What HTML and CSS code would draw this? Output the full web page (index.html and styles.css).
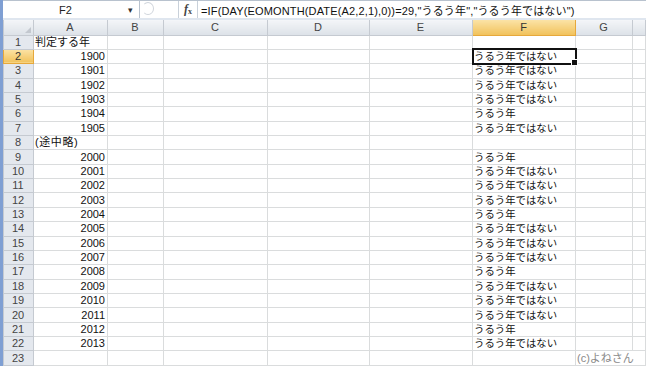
FILE: index.html
```html
<!DOCTYPE html>
<html lang="ja">
<head>
  <meta charset="UTF-8" />
  <title>うるう年の判定</title>
  <link rel="stylesheet" href="styles.css">
</head>
<body>
  <div class="window">
    <div class="formula-bar">
      <div class="name-box">
        <span class="name">F2</span>
        <span class="arrow">▾</span>
      </div>
      <div class="grip"></div>
      <div class="fx"><i>f</i><small>x</small></div>
      <div class="formula">=IF(DAY(EOMONTH(DATE(A2,2,1),0))=29,"うるう年","うるう年ではない")</div>
    </div>

    <table class="sheet">
      <colgroup>
        <col class="c-hdr"><col class="c-a"><col class="c-b"><col class="c-c"><col class="c-d">
        <col class="c-e"><col class="c-f"><col class="c-g"><col class="c-h">
      </colgroup>
      <thead>
        <tr>
          <th class="corner"><span class="tri"></span></th>
          <th>A</th><th>B</th><th>C</th><th>D</th><th>E</th><th class="sel">F</th><th>G</th><th></th>
        </tr>
      </thead>
      <tbody>
        <tr><th>1</th><td>判定する年</td><td></td><td></td><td></td><td></td><td></td><td></td><td></td></tr>
        <tr><th class="sel">2</th><td class="num">1900</td><td></td><td></td><td></td><td></td><td class="active">うるう年ではない<span class="handle"></span></td><td></td><td></td></tr>
        <tr><th>3</th><td class="num">1901</td><td></td><td></td><td></td><td></td><td>うるう年ではない</td><td></td><td></td></tr>
        <tr><th>4</th><td class="num">1902</td><td></td><td></td><td></td><td></td><td>うるう年ではない</td><td></td><td></td></tr>
        <tr><th>5</th><td class="num">1903</td><td></td><td></td><td></td><td></td><td>うるう年ではない</td><td></td><td></td></tr>
        <tr><th>6</th><td class="num">1904</td><td></td><td></td><td></td><td></td><td>うるう年</td><td></td><td></td></tr>
        <tr><th>7</th><td class="num">1905</td><td></td><td></td><td></td><td></td><td>うるう年ではない</td><td></td><td></td></tr>
        <tr><th>8</th><td class="note">(途中略)</td><td></td><td></td><td></td><td></td><td></td><td></td><td></td></tr>
        <tr><th>9</th><td class="num">2000</td><td></td><td></td><td></td><td></td><td>うるう年</td><td></td><td></td></tr>
        <tr><th>10</th><td class="num">2001</td><td></td><td></td><td></td><td></td><td>うるう年ではない</td><td></td><td></td></tr>
        <tr><th>11</th><td class="num">2002</td><td></td><td></td><td></td><td></td><td>うるう年ではない</td><td></td><td></td></tr>
        <tr><th>12</th><td class="num">2003</td><td></td><td></td><td></td><td></td><td>うるう年ではない</td><td></td><td></td></tr>
        <tr><th>13</th><td class="num">2004</td><td></td><td></td><td></td><td></td><td>うるう年</td><td></td><td></td></tr>
        <tr><th>14</th><td class="num">2005</td><td></td><td></td><td></td><td></td><td>うるう年ではない</td><td></td><td></td></tr>
        <tr><th>15</th><td class="num">2006</td><td></td><td></td><td></td><td></td><td>うるう年ではない</td><td></td><td></td></tr>
        <tr><th>16</th><td class="num">2007</td><td></td><td></td><td></td><td></td><td>うるう年ではない</td><td></td><td></td></tr>
        <tr><th>17</th><td class="num">2008</td><td></td><td></td><td></td><td></td><td>うるう年</td><td></td><td></td></tr>
        <tr><th>18</th><td class="num">2009</td><td></td><td></td><td></td><td></td><td>うるう年ではない</td><td></td><td></td></tr>
        <tr><th>19</th><td class="num">2010</td><td></td><td></td><td></td><td></td><td>うるう年ではない</td><td></td><td></td></tr>
        <tr><th>20</th><td class="num">2011</td><td></td><td></td><td></td><td></td><td>うるう年ではない</td><td></td><td></td></tr>
        <tr><th>21</th><td class="num">2012</td><td></td><td></td><td></td><td></td><td>うるう年</td><td></td><td></td></tr>
        <tr><th>22</th><td class="num">2013</td><td></td><td></td><td></td><td></td><td>うるう年ではない</td><td></td><td></td></tr>
        <tr><th>23</th><td></td><td></td><td></td><td></td><td></td><td></td><td class="credit" colspan="2">(c)よねさん</td></tr>
      </tbody>
    </table>
  </div>
</body>
</html>
```

FILE: styles.css
```css
body {
  margin: 0;
  background-color: #fff;
  font-family: 'Liberation Sans', 'Noto Sans CJK JP', sans-serif;
  font-size: 11px;
  color: #111;
}

.window {
  height: 366px;
  overflow: hidden;
  border-left: 3px solid #7f9fd3;
  background-color: #fff;
}

/* formula bar */
.formula-bar {
  display: flex;
  align-items: stretch;
  height: 17px;
  padding-bottom: 2px;
  border-top: 1px solid #b8c2ce;
  background-color: #dfe6ef;
}

.name-box {
  display: flex;
  align-items: center;
  width: 137px;
  padding: 0 6px 0 0;
  box-sizing: border-box;
  background-color: #fff;
  border-right: 1px solid #b8c2ce;
}

.name {
  flex: 1;
  text-align: center;
  color: #222;
}

.arrow {
  font-size: 9px;
  color: #333;
}

.grip {
  width: 38px;
  background-color: #fff;
  position: relative;
  border-right: 1px solid #c9d1da;
}

.grip::before {
  content: "";
  position: absolute;
  left: 2px;
  top: 1px;
  width: 12px;
  height: 13px;
  border-radius: 50%;
  border: 1px solid #d0d5dc;
  border-left-color: transparent;
  box-sizing: border-box;
}

.fx {
  width: 18px;
  display: flex;
  align-items: center;
  justify-content: center;
  background-color: #fff;
  border-right: 1px solid #c9d1da;
  font-family: 'Liberation Serif', serif;
  font-weight: bold;
  font-size: 12px;
  color: #444;
}

.fx small {
  font-size: 8px;
  margin-top: 3px;
}

.formula {
  flex: 1;
  display: flex;
  align-items: center;
  padding-left: 3px;
  background-color: #fff;
  white-space: nowrap;
  letter-spacing: 0.15px;
}

/* grid */
.sheet {
  border-collapse: collapse;
  table-layout: fixed;
  width: 643px;
}

.c-hdr { width: 30px; }
.c-a { width: 74px; }
.c-b { width: 56px; }
.c-c { width: 104px; }
.c-d { width: 102px; }
.c-e { width: 103px; }
.c-f { width: 103px; }
.c-g { width: 57px; }

.sheet th,
.sheet td {
  padding: 0 2px 0 1px;
  height: 14.36px;
  line-height: 13px;
  border: 1px solid #dadcdd;
  white-space: nowrap;
  overflow: visible;
  box-sizing: border-box;
}

.sheet td:nth-child(7) {
  font-size: 10.4px;
}

.sheet thead th {
  height: 15px;
  font-weight: normal;
  color: #444;
  background: linear-gradient(#f3f5f8, #dde2e8);
  border-color: #c5cad1;
  border-top: none;
}

.sheet tbody th {
  font-weight: normal;
  color: #444;
  background-color: #e4e8ee;
  border-color: #c5cad1;
  text-align: center;
}

.sheet th.sel {
  background: linear-gradient(#fbe3a6, #f1c25c);
  border-color: #e6a83b;
  color: #333;
}

.corner {
  position: relative;
}

.tri {
  position: absolute;
  right: 2px;
  bottom: 2px;
  width: 0;
  height: 0;
  border-left: 6px solid transparent;
  border-bottom: 6px solid #c3c8cf;
}

.num {
  text-align: right;
}

.note {
  letter-spacing: 0.6px;
}

.active {
  position: relative;
  outline: 2px solid #111;
  outline-offset: -1px;
}

.handle {
  position: absolute;
  right: -3px;
  bottom: -3px;
  width: 5px;
  height: 5px;
  background-color: #111;
  border: 1px solid #fff;
}

.credit {
  color: #8a8a8a;
  padding-left: 2px;
}
```
